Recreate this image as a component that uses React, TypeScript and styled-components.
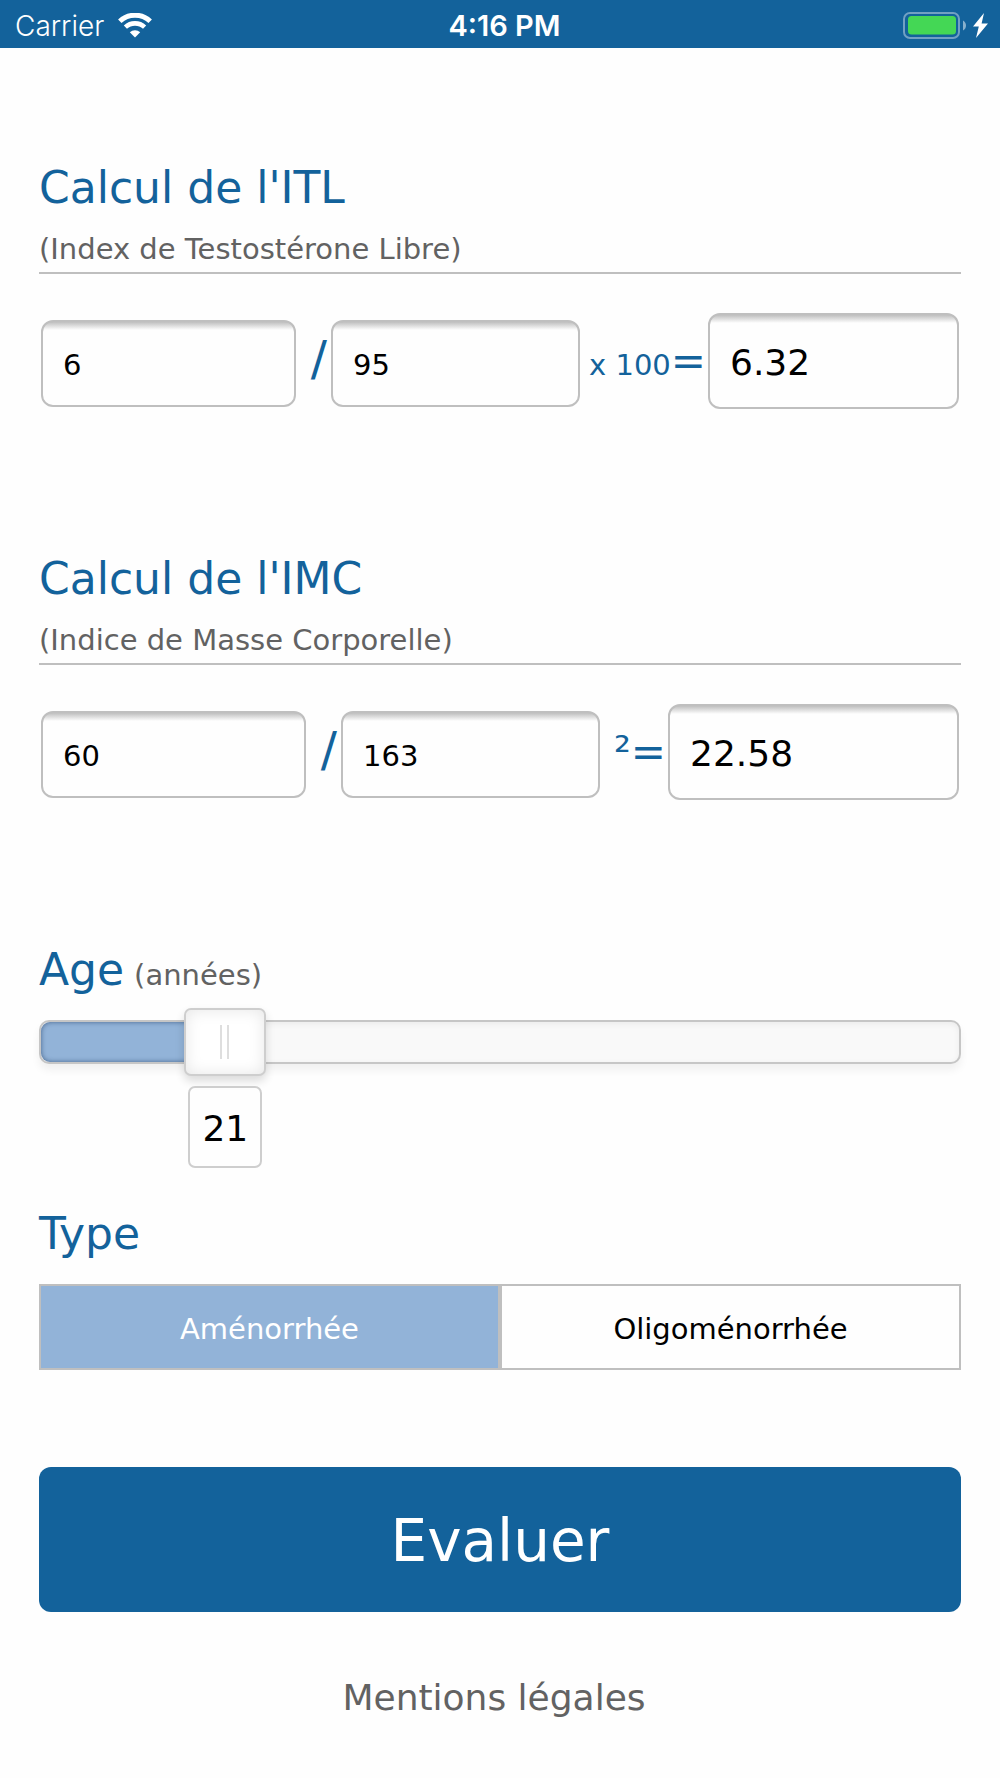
import React, { useState } from "react";
import styled, { createGlobalStyle, css } from "styled-components";

const color = {
  brand: "#13629b",
  accent: "#92b3d8",
  line: "#bfbfbf",
  muted: "#626262",
  page: "#fefefe",
};

const size = { small: "29px", value: "36px", operator: "42px", title: "44px", slash: "48px", action: "58px" };

const THUMB = 82;
const AGE_MIN = 12;
const AGE_MAX = 64;

const GlobalStyle = createGlobalStyle`
  *, *::before, *::after { box-sizing: border-box; }
  body {
    margin: 0;
    background: ${color.page};
    color: #000;
    font-family: Verdana, "DejaVu Sans", sans-serif;
  }
  button, input, output { font-family: inherit; }
`;

const StatusBar = styled.header`
  display: grid;
  grid-template-columns: 1fr auto 1fr;
  align-items: center;
  height: 48px;
  padding: 3px 12px 0 15px;
  background: ${color.brand};
  color: #fff;
  font-family: Inter, "Liberation Sans", sans-serif;
  font-size: 28px;
  font-weight: 300;
  line-height: 34px;
`;

const StatusGroup = styled.div<{ $end?: boolean }>`
  display: flex;
  align-items: center;
  gap: ${(p) => (p.$end ? "6px" : "14px")};
  justify-content: ${(p) => (p.$end ? "flex-end" : "flex-start")};
  svg { display: block; }
`;

const Clock = styled.time`
  font-size: 29px;
  font-weight: 600;
  padding-left: 6px;
`;

const Form = styled.form`
  display: flex;
  flex-direction: column;
  padding: 114px 39px 58px;
`;

const Section = styled.section`
  margin-bottom: 144px;
`;

const SectionHead = styled.div`
  display: flex;
  flex-direction: column;
  gap: 17px;
  padding-bottom: 5px;
  border-bottom: 2px solid ${color.line};
`;

const Title = styled.h2`
  margin: 0;
  color: ${color.brand};
  font-size: ${size.title};
  font-weight: 400;
  line-height: 52px;
`;

const Note = styled.span`
  color: ${color.muted};
  font-size: ${size.small};
  line-height: 36px;
`;

const Formula = styled.div<{ $columns: string }>`
  display: grid;
  grid-template-columns: ${(p) => p.$columns};
  align-items: baseline;
  margin-top: 39px;
  padding: 0 2px;
`;

const Field = styled.input<{ $result?: boolean }>`
  width: 100%;
  min-width: 0;
  height: ${(p) => (p.$result ? "96px" : "87px")};
  padding: 2px 19px 0 20px;
  border: 2px solid ${color.line};
  border-radius: 12px;
  outline: none;
  background: linear-gradient(${color.line}, ${color.page} 8px);
  color: #000;
  font-size: ${(p) => (p.$result ? size.value : size.small)};
`;

const Operator = styled.span<{ $slash?: boolean }>`
  display: flex;
  align-items: baseline;
  justify-content: flex-end;
  padding-right: ${(p) => (p.$slash ? "4px" : "2px")};
  color: ${color.brand};
  font-size: ${(p) => (p.$slash ? size.slash : size.operator)};
  line-height: 52px;
  white-space: pre;
`;

const Factor = styled.span`
  font-size: ${size.small};
`;

const AgeLabel = styled.label`
  display: flex;
  align-items: baseline;
  gap: 10px;
`;

const Slider = styled.div`
  display: grid;
  align-items: center;
  margin-top: 12px;
  > * { grid-area: 1 / 1; }
`;

const Track = styled.div`
  height: 44px;
  border: 2px solid #c6c6c6;
  border-radius: 10px;
  background: #f9f9f9;
  box-shadow: inset 0 2px 6px rgba(0, 0, 0, 0.06), 0 6px 8px rgba(0, 0, 0, 0.06);
`;

const Fill = styled.div`
  height: 100%;
  border-radius: 9px 0 0 9px;
  background: ${color.accent};
  box-shadow: inset 0 0 5px rgba(30, 60, 100, 0.65);
`;

const thumb = css`
  width: ${THUMB}px;
  height: 68px;
  border: 2px solid #cecece;
  border-radius: 7px;
  background:
    linear-gradient(#dedede, #dedede) 34px center / 2px 34px no-repeat,
    linear-gradient(#dedede, #dedede) 41px center / 2px 34px no-repeat,
    #fff;
  box-shadow: inset 0 0 16px rgba(0, 0, 0, 0.1), 0 5px 10px rgba(0, 0, 0, 0.14);
`;

const Range = styled.input`
  appearance: none;
  width: 100%;
  height: 68px;
  margin: 0;
  background: transparent;
  &::-webkit-slider-thumb { appearance: none; ${thumb} }
  &::-moz-range-thumb { ${thumb} }
`;

const BubbleRail = styled.div`
  margin-top: 10px;
  padding: 0 ${THUMB / 2}px;
`;

const Bubble = styled.output`
  display: flex;
  align-items: center;
  justify-content: center;
  width: 74px;
  height: 82px;
  padding-top: 2px;
  border: 2px solid #cecece;
  border-radius: 7px;
  font-size: ${size.value};
  transform: translateX(-50%);
`;

const TypeGroup = styled.fieldset`
  min-width: 0;
  margin: 40px 0 0;
  padding: 0;
  border: 0;
  legend { padding: 0; }
`;

const Segments = styled.div`
  display: grid;
  grid-template-columns: 1fr 1fr;
  margin-top: 24px;
`;

const Segment = styled.label<{ $on: boolean }>`
  position: relative;
  display: flex;
  align-items: center;
  justify-content: center;
  height: 86px;
  padding-top: 4px;
  border: 2px solid ${color.line};
  background: ${(p) => (p.$on ? color.accent : color.page)};
  color: ${(p) => (p.$on ? "#fff" : "#000")};
  font-size: ${size.small};
  cursor: pointer;
`;

const Radio = styled.input`
  position: absolute;
  inset: 0;
  appearance: none;
  margin: 0;
  cursor: pointer;
`;

const Submit = styled.button`
  height: 145px;
  margin-top: 97px;
  padding: 2px 0 0;
  border: 0;
  border-radius: 12px;
  background: ${color.brand};
  color: #fff;
  font-size: ${size.action};
  cursor: pointer;
`;

const Legal = styled.a`
  align-self: center;
  margin-top: 64px;
  padding-right: 12px;
  color: ${color.muted};
  font-size: ${size.value};
  line-height: 44px;
  text-decoration: none;
`;

const Wifi = () => (
  <svg width="34" height="25" viewBox="0 0 34 25" fill="none" aria-hidden="true">
    <path d="M1.8 8.2a22.2 22.2 0 0 1 30.4 0" stroke="#fff" strokeWidth="5" />
    <path d="M7.4 14.2a14 14 0 0 1 19.2 0" stroke="#fff" strokeWidth="4.6" />
    <path d="M17 24.6l-5.2-5.3a7.6 7.6 0 0 1 10.4 0z" fill="#fff" />
  </svg>
);

const Battery = () => (
  <svg width="64" height="27" viewBox="0 0 64 27" fill="none" aria-hidden="true">
    <rect x="1" y="1" width="55" height="25" rx="6" stroke="#fff" strokeOpacity=".4" strokeWidth="2" />
    <rect x="5" y="4" width="48" height="18.5" rx="3.5" fill="#44d755" />
    <path d="M60 8.5c4 2 4 8 0 10z" fill="#fff" fillOpacity=".5" />
  </svg>
);

const Bolt = () => (
  <svg width="15" height="25" viewBox="0 0 15 25" aria-hidden="true">
    <path d="M11 0L0 13.6h5.8L3 25 15 10.6H8.600z" fill="#fff" />
  </svg>
);

const format = (n: number) => (Number.isFinite(n) ? n.toFixed(2) : "");

export default function App() {
  const [testosterone, setTestosterone] = useState("6");
  const [shbg, setShbg] = useState("95");
  const [weight, setWeight] = useState("60");
  const [height, setHeight] = useState("163");
  const [age, setAge] = useState(21);
  const [type, setType] = useState("Aménorrhée");

  const itl = format((Number(testosterone) / Number(shbg)) * 100);
  const imc = format(Number(weight) / (Number(height) / 100) ** 2);
  const ratio = (age - AGE_MIN) / (AGE_MAX - AGE_MIN);

  return (
    <>
      <GlobalStyle />
      <StatusBar>
        <StatusGroup>
          <span>Carrier</span>
          <Wifi />
        </StatusGroup>
        <Clock>4:16 PM</Clock>
        <StatusGroup $end>
          <Battery />
          <Bolt />
        </StatusGroup>
      </StatusBar>

      <Form onSubmit={(e) => e.preventDefault()}>
        <Section>
          <SectionHead>
            <Title>Calcul de l'ITL</Title>
            <Note>(Index de Testostérone Libre)</Note>
          </SectionHead>
          <Formula $columns="255fr 35px 249fr 128px 251fr">
            <Field aria-label="Testostérone" inputMode="decimal" value={testosterone} onChange={(e) => setTestosterone(e.target.value)} />
            <Operator $slash>/</Operator>
            <Field aria-label="SHBG" inputMode="decimal" value={shbg} onChange={(e) => setShbg(e.target.value)} />
            <Operator><Factor>x 100</Factor>=</Operator>
            <Field aria-label="ITL" $result readOnly value={itl} />
          </Formula>
        </Section>

        <Section>
          <SectionHead>
            <Title>Calcul de l'IMC</Title>
            <Note>(Indice de Masse Corporelle)</Note>
          </SectionHead>
          <Formula $columns="265fr 35px 259fr 68px 291fr">
            <Field aria-label="Poids" inputMode="decimal" value={weight} onChange={(e) => setWeight(e.target.value)} />
            <Operator $slash>/</Operator>
            <Field aria-label="Taille" inputMode="decimal" value={height} onChange={(e) => setHeight(e.target.value)} />
            <Operator>²=</Operator>
            <Field aria-label="IMC" $result readOnly value={imc} />
          </Formula>
        </Section>

        <AgeLabel htmlFor="age">
          <Title as="span">Age</Title>
          <Note>(années)</Note>
        </AgeLabel>
        <Slider>
          <Track>
            <Fill style={{ width: `${10 + ratio * 80}%` }} />
          </Track>
          <Range id="age" type="range" min={AGE_MIN} max={AGE_MAX} value={age} onChange={(e) => setAge(Number(e.target.value))} />
        </Slider>
        <BubbleRail>
          <Bubble htmlFor="age" style={{ marginLeft: `${ratio * 100}%` }}>{age}</Bubble>
        </BubbleRail>

        <TypeGroup>
          <Title as="legend">Type</Title>
          <Segments>
            {["Aménorrhée", "Oligoménorrhée"].map((name) => (
              <Segment key={name} $on={type === name}>
                <Radio type="radio" name="type" checked={type === name} onChange={() => setType(name)} />
                {name}
              </Segment>
            ))}
          </Segments>
        </TypeGroup>

        <Submit type="submit">Evaluer</Submit>
        <Legal href="#mentions">Mentions légales</Legal>
      </Form>
    </>
  );
}
